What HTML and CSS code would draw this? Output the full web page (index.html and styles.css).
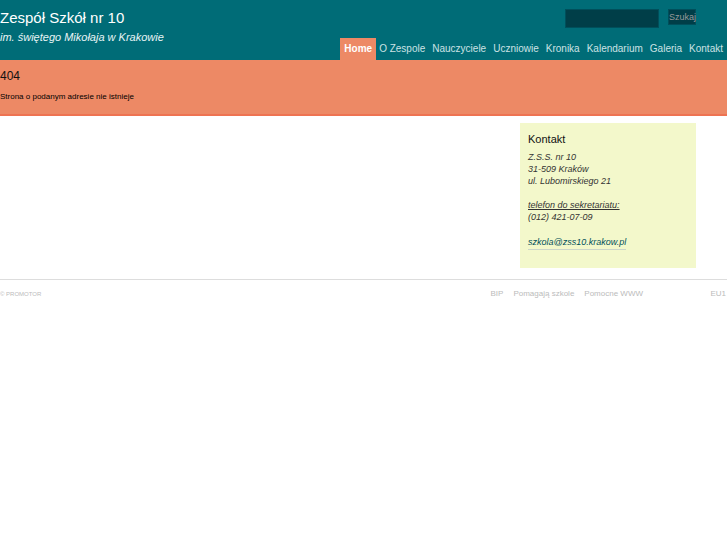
FILE: index.html
```html
<!DOCTYPE html>
<html lang="pl">
<head>
<meta charset="utf-8">
<title>Zespół Szkół nr 10</title>
<link rel="stylesheet" href="styles.css">
</head>
<body>
<header class="header">
  <div class="top">
    <div class="brand">
      <h1>Zespół Szkół nr 10</h1>
      <p>im. świętego Mikołaja w Krakowie</p>
    </div>
    <form class="search">
      <input type="text" aria-label="Szukaj">
      <button type="submit">Szukaj</button>
    </form>
  </div>
  <nav class="nav">
    <a class="active" href="#">Home</a>
    <a href="#">O Zespole</a>
    <a href="#">Nauczyciele</a>
    <a href="#">Uczniowie</a>
    <a href="#">Kronika</a>
    <a href="#">Kalendarium</a>
    <a href="#">Galeria</a>
    <a href="#">Kontakt</a>
  </nav>
</header>
<main>
  <section class="message">
    <h2>404</h2>
    <p>Strona o podanym adresie nie istnieje</p>
  </section>
  <aside class="contact">
    <h3>Kontakt</h3>
    <address>
      <p>Z.S.S. nr 10<br>31-509 Kraków<br>ul. Lubomirskiego 21</p>
      <p><u>telefon do sekretariatu:</u><br>(012) 421-07-09</p>
      <p><a href="#">szkola@zss10.krakow.pl</a></p>
    </address>
  </aside>
</main>
<footer class="footer">
  <small>© PROMOTOR</small>
  <nav class="links">
    <a href="#">BIP</a>
    <a href="#">Pomagają szkole</a>
    <a href="#">Pomocne WWW</a>
  </nav>
  <a class="eu" href="#">EU1</a>
</footer>
</body>
</html>
```
FILE: styles.css
```css
* {
  box-sizing: border-box;
}

body,
h1,
h2,
h3,
p {
  margin: 0;
  font-weight: normal;
}

body {
  background: #fff;
  color: #111;
  font: 9px/12px "Liberation Sans", Arial, sans-serif;
}

a {
  text-decoration: none;
}

.header {
  background: #006c77;
  color: #fff;
}

.top {
  display: flex;
  justify-content: space-between;
  height: 38px;
  padding: 9px 31px 0 0;
}

.brand h1 {
  font-size: 15px;
  line-height: 18px;
}

.brand p {
  font-size: 11px;
  font-style: italic;
  line-height: 20px;
  color: #e8f4f5;
}

.search {
  display: flex;
  align-items: flex-start;
  gap: 9px;
}

.search input,
.search button {
  margin: 0;
  padding: 0;
  border: 1px solid #004f5b;
  background: #003e48;
  color: #999;
  font: 9px/13px "Liberation Sans", Arial, sans-serif;
}

.search input {
  width: 94px;
  height: 19px;
}

.search button {
  width: 28px;
  height: 16px;
}

.nav {
  display: flex;
  justify-content: flex-end;
}

.nav a {
  padding: 0 4px 0 3px;
  color: #cce2e4;
  font-size: 10px;
  line-height: 22px;
}

.nav .active {
  padding: 0 4px;
  background: #ed8965;
  color: #fff;
  font-weight: bold;
}

.message {
  padding: 8px 0 11px;
  border-bottom: 2px solid #ee7352;
  background: #ed8965;
}

.message h2 {
  margin-bottom: 6px;
  font-size: 12px;
  line-height: 17px;
}

.message p {
  color: #000;
  font-size: 8px;
}

.contact {
  width: 176px;
  margin: 7px 31px 11px auto;
  padding: 8px 8px 6px;
  background: #f3f8cb;
}

.contact h3 {
  margin-bottom: 4px;
  font-size: 11px;
  line-height: 16px;
}

.contact p {
  margin-bottom: 12px;
  color: #333;
}

.contact a {
  display: inline-block;
  padding: 1px 0;
  border-bottom: 1px solid #ccd6c8;
  color: #00505a;
}

.footer {
  display: flex;
  padding: 8px 1px 8px 0;
  border-top: 1px solid #ddd;
  color: #bbb;
  font-size: 8px;
}

.footer small {
  flex: 1;
  font-size: 6px;
}

.footer a {
  color: #bbb;
}

.links {
  display: flex;
  gap: 10px;
}

.eu {
  width: 83px;
  text-align: right;
}
```
